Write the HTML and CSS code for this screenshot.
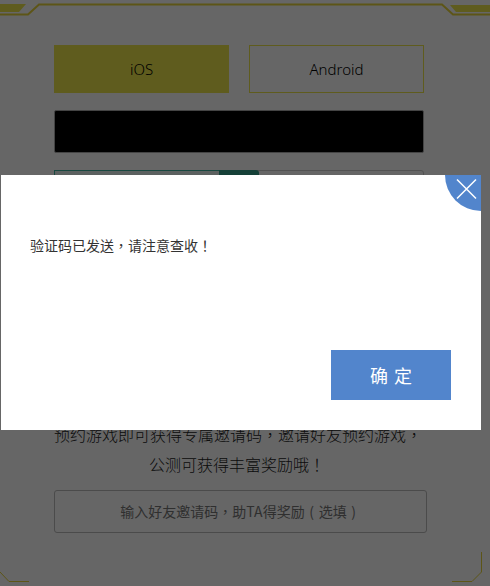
FILE: index.html
```html
<!DOCTYPE html>
<html lang="zh-CN">
<head>
<meta charset="utf-8">
<title>预约</title>
<link rel="stylesheet" href="styles.css">
</head>
<body>
<main class="page">
  <svg class="frame" width="490" height="586" viewBox="0 0 490 586">
    <path class="frame-fill" d="M0 4H26L19 12H0Z"/>
    <path class="frame-fill" d="M490 5H450L456 12H490Z"/>
    <path class="frame-line" d="M0 14.500H28L39 4.500H442L453 14.500H490"/>
    <path class="frame-thin" d="M0 572L9 581.500H29"/>
    <path class="frame-thin" d="M481.500 552V572L472 581.500H452"/>
  </svg>
  <div class="platforms">
    <button class="platform platform-on">iOS</button>
    <button class="platform">Android</button>
  </div>
  <div class="phone"></div>
  <div class="code-row"><span class="code-input"></span><span class="code-send"></span></div>
  <div class="spacer"></div>
  <p class="intro">预约游戏即可获得专属邀请码<span class="punct" lang="zh-TW">，</span>邀请好友预约游戏<span class="punct" lang="zh-TW">，</span><br>公测可获得丰富奖励哦<span class="punct" lang="zh-TW">！</span></p>
  <div class="invite">输入好友邀请码<span class="punct" lang="zh-TW">，</span>助TA得奖励<span class="paren">(</span>选填<span class="paren">)</span></div>
</main>
<div class="overlay"></div>
<section class="dialog">
  <p class="message">验证码已发送<span class="punct" lang="zh-TW">，</span>请注意查收<span class="punct" lang="zh-TW">！</span></p>
  <button class="ok">确 定</button>
  <div class="close">
    <svg width="22" height="22" viewBox="0 0 22 22"><path d="M1 1.500L20 20.500M20 1.500L1 20.500"/></svg>
  </div>
</section>
</body>
</html>
```
FILE: styles.css
```css
* { box-sizing: border-box; }
html, body { margin: 0; padding: 0; height: 586px; overflow: hidden; }
body { background: #fff; font-family: "Noto Sans CJK SC", "Noto Sans", sans-serif; color: #222; position: relative; }
.punct { font-family: "Noto Sans CJK TC", sans-serif; }
.paren { display: inline-block; width: 14px; text-align: center; }
.page { width: 490px; height: 586px; padding: 45px 66px 0 54px; position: relative; }
.frame { position: absolute; left: 0; top: 0; }
.frame-fill { fill: #ede64b; }
.frame-line { fill: none; stroke: #e8d53a; stroke-width: 2; }
.frame-thin { fill: none; stroke: #e8d53a; stroke-width: 1; }
.platforms { display: flex; gap: 20px; position: relative; }
.platform { width: 175px; height: 48px; padding: 0; background: #fff; border: 1px solid #ede64b; font: 300 15px/46px "Noto Sans", "Noto Sans CJK SC", sans-serif; color: #000; }
.platform-on { background: #ede64b; }
.phone { height: 43px; margin-top: 17px; background: #000; border: 1px solid #aaa; border-radius: 2px; }
.code-row { display: flex; height: 42px; margin-top: 17px; border: 1px solid #ccc; border-radius: 3px; }
.code-input { width: 165px; border: 1px solid #3fb5a0; border-right: 0; margin: -1px 0 0 -1px; background: #e6f3ef; }
.code-send { width: 40px; background: #35a08d; margin-top: -1px; border-radius: 0 3px 0 0; }
.spacer { height: 207px; }
.intro { margin: 0; width: 366px; font-size: 16px; line-height: 30px; text-align: center; color: #222; font-weight: 300; white-space: nowrap; }
.invite { width: 373px; height: 43px; margin-top: 11px; border: 1px solid #bbb; border-radius: 3px; font-size: 14px; line-height: 41px; text-align: center; color: #777; }
.overlay { position: absolute; inset: 0; background: rgba(0, 0, 0, 0.6); }
.dialog { position: absolute; left: 1px; top: 175px; width: 480px; height: 255px; background: #fff; overflow: hidden; }
.message { margin: 0; position: absolute; left: 29px; top: 59px; font-size: 14px; line-height: 22px; color: #333; }
.ok { position: absolute; left: 330px; top: 175px; width: 120px; height: 50px; padding: 0; border: 0; background: #5285cc; color: #fff; font: 18px/50px "Noto Sans CJK SC", sans-serif; word-spacing: 2px; }
.close { position: absolute; right: -36px; top: -36px; width: 72px; height: 72px; border-radius: 50%; background: #5285cc; }
.close svg { position: absolute; left: 11px; top: 39px; }
.close path { stroke: #fff; stroke-width: 1.5; fill: none; }
```
